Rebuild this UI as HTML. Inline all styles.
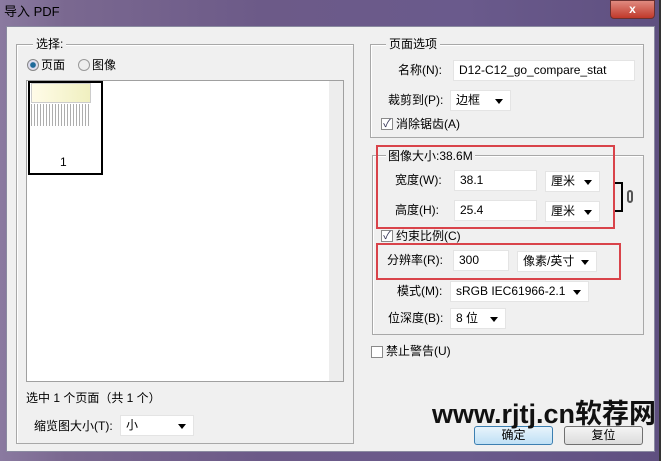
<!DOCTYPE html><html><head><meta charset="utf-8"><style>
*{margin:0;padding:0;box-sizing:border-box}
body{width:668px;height:461px;overflow:hidden;position:relative;background:#fff;font:12px/15px "Liberation Sans","Noto Sans CJK SC",sans-serif;color:#000}
.a{position:absolute}
.title{left:0;top:0;width:660px;height:461px;background:linear-gradient(90deg,#8a7aa0 0%,#7a6890 10%,#6c5a88 40%,#6a5a8c 70%,#5f5080 100%)}
.body{left:6px;top:26px;width:649px;height:426px;background:#f0f0f0;border:1px solid #8a8aa0}
.grp{border:1px solid #a8a8a8;box-shadow:1px 1px 0 #fff inset}
.lab{background:#f0f0f0;padding:0 3px;font-size:12px}
.in{background:#fff;border:1px solid #e4e4e4;height:21px;line-height:19px;padding-left:5px;font-size:12px}
.sel::after{content:"";position:absolute;right:7px;top:8px;border:4px solid transparent;border-top:5px solid #000;border-bottom:0}
.cb{width:12px;height:12px;border:1px solid #8a8a8a;background:#fff;font-size:11px;line-height:10px;text-align:center;color:#335}
.red{border:2px solid #d9434a}
.btn{border:1px solid #707070;border-radius:3px;background:linear-gradient(#f4f4f4,#dcdcdc);text-align:center;line-height:17px}
</style></head><body>
<div class="a title"></div>
<div class="a" style="left:4px;top:4px;color:#000;font-size:13px">导入 PDF</div>
<div class="a" style="left:610px;top:0;width:45px;height:19px;background:linear-gradient(#e08a80,#c0392b);border:1px solid #6a3030;border-radius:0 0 4px 4px;color:#fff;text-align:center;font-weight:bold;line-height:17px">x</div>
<div class="a" style="left:659px;top:0;width:2px;height:461px;background:#333"></div>
<div class="a body"></div>
<div class="a grp" style="left:16px;top:44px;width:338px;height:400px"></div>
<div class="a lab" style="left:33px;top:37px">选择:</div>
<div class="a" style="left:27px;top:59px;width:12px;height:12px;border-radius:50%;border:1px solid #888;background:radial-gradient(#1e6a9a 35%,#dde 45%)"></div>
<div class="a" style="left:41px;top:58px">页面</div>
<div class="a" style="left:78px;top:59px;width:12px;height:12px;border-radius:50%;border:1px solid #999;background:#eee"></div>
<div class="a" style="left:92px;top:58px">图像</div>
<div class="a" style="left:26px;top:80px;width:318px;height:302px;background:#fff;border:1px solid #a0a0a0"></div>
<div class="a" style="left:329px;top:81px;width:14px;height:300px;background:#ededed"></div>
<div class="a" style="left:28px;top:81px;width:75px;height:94px;border:2px solid #000;background:#fff"></div>
<div class="a" style="left:31px;top:83px;width:60px;height:20px;background:linear-gradient(90deg,#fffbe8,#f0f0c0);border:1px solid #ccc"></div>
<div class="a" style="left:31px;top:104px;width:58px;height:22px;background:repeating-linear-gradient(90deg,#777 0 1px,#fff 1px 3px);opacity:.6"></div>
<div class="a" style="left:60px;top:155px;font-size:12px">1</div>
<div class="a" style="left:26px;top:391px">选中 1 个页面（共 1 个）</div>
<div class="a" style="left:34px;top:419px">缩览图大小(T):</div>
<div class="a in sel" style="left:120px;top:415px;width:74px">小</div>
<div class="a grp" style="left:370px;top:44px;width:274px;height:94px"></div>
<div class="a lab" style="left:386px;top:37px">页面选项</div>
<div class="a" style="left:398px;top:63px">名称(N):</div>
<div class="a in" style="left:453px;top:60px;width:182px">D12-C12_go_compare_stat</div>
<div class="a" style="left:388px;top:93px">裁剪到(P):</div>
<div class="a in sel" style="left:450px;top:90px;width:61px">边框</div>
<div class="a cb" style="left:381px;top:118px">✓</div>
<div class="a" style="left:396px;top:117px">消除锯齿(A)</div>
<div class="a grp" style="left:372px;top:155px;width:272px;height:180px"></div>
<div class="a" style="left:386px;top:149px;background:#f0f0f0;padding:0 2px">图像大小:38.6M</div>
<div class="a" style="left:395px;top:173px">宽度(W):</div>
<div class="a in" style="left:454px;top:170px;width:83px">38.1</div>
<div class="a in sel" style="left:545px;top:171px;width:55px">厘米</div>
<div class="a" style="left:395px;top:203px">高度(H):</div>
<div class="a in" style="left:454px;top:200px;width:83px">25.4</div>
<div class="a in sel" style="left:545px;top:201px;width:55px">厘米</div>
<div class="a" style="left:615px;top:182px;width:8px;height:30px;border:2px solid #000;border-left:0"></div>
<div class="a" style="left:627px;top:190px;width:6px;height:13px;border:2px solid #555;border-radius:3px"></div>
<div class="a red" style="left:376px;top:145px;width:239px;height:84px"></div>
<div class="a cb" style="left:381px;top:230px">✓</div>
<div class="a" style="left:396px;top:229px">约束比例(C)</div>
<div class="a" style="left:387px;top:253px">分辨率(R):</div>
<div class="a in" style="left:453px;top:250px;width:56px">300</div>
<div class="a in sel" style="left:517px;top:251px;width:80px">像素/英寸</div>
<div class="a red" style="left:376px;top:243px;width:245px;height:37px"></div>
<div class="a" style="left:397px;top:284px">模式(M):</div>
<div class="a in sel" style="left:450px;top:281px;width:139px">sRGB IEC61966-2.1</div>
<div class="a" style="left:388px;top:311px">位深度(B):</div>
<div class="a in sel" style="left:450px;top:308px;width:56px">8 位</div>
<div class="a cb" style="left:371px;top:346px"></div>
<div class="a" style="left:386px;top:344px">禁止警告(U)</div>
<div class="a btn" style="left:474px;top:426px;width:79px;border-color:#3c7fb1;background:linear-gradient(#e8f4fc,#bfe0f5)">确定</div>
<div class="a btn" style="left:564px;top:426px;width:79px">复位</div>
<div class="a" style="left:432px;top:397px;font-size:27px;font-weight:bold;color:#111;letter-spacing:0px;white-space:nowrap;line-height:34px">www.rjtj.cn软荐网</div>
</body></html>
